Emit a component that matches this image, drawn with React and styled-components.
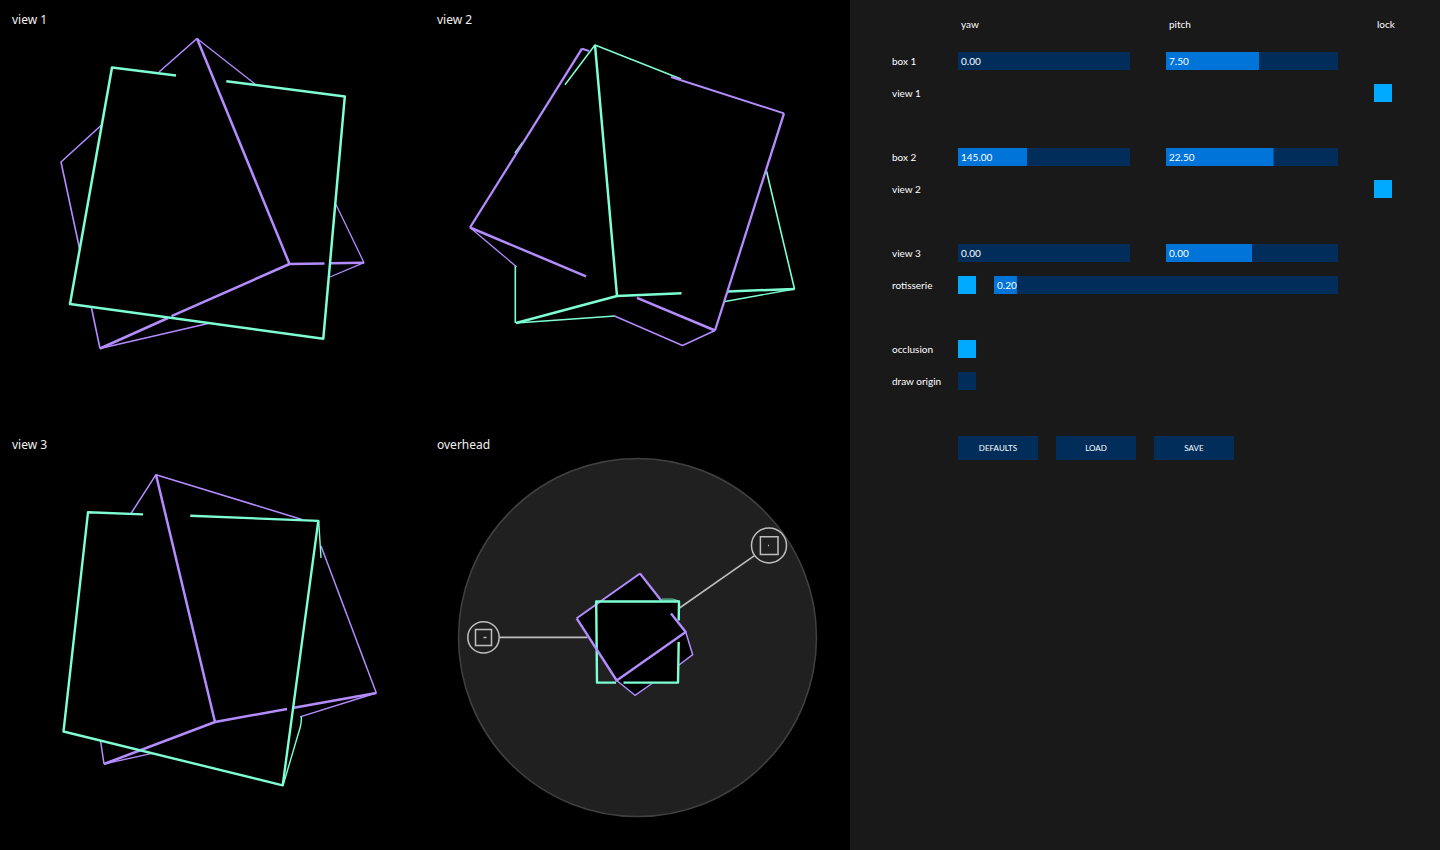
import React, { useState } from "react";
import styled, { createGlobalStyle } from "styled-components";

const MINT = "#7fffd4";
const VIOLET = "#b48cff";
const GREY = "#bebebe";

const GlobalStyle = createGlobalStyle`
  *, *::before, *::after { box-sizing: border-box; }
  body { margin: 0; background: #000; }
`;

const Page = styled.div`
  display: grid;
  grid-template-columns: 85fr 59fr;
  min-height: 100vh;
  background: #000;
  color: #fff;
`;

const Views = styled.main`
  display: grid;
  grid-template-columns: 1fr 1fr;
  align-content: start;
`;

const View = styled.figure`
  position: relative;
  margin: 0;
`;

const Caption = styled.figcaption`
  position: absolute;
  top: 11px;
  left: 12px;
  color: #f0f0f0;
  font: 12px/18px "Noto Sans", "Open Sans", sans-serif;
`;

const Canvas = styled.svg`
  display: block;
  width: 100%;
  height: auto;
`;

const Panel = styled.form`
  display: flex;
  flex-direction: column;
  gap: 46px;
  padding: 16px 48px 24px 40px;
  background: #191919;
  font: 10px/18px "Lato", sans-serif;
`;

const Group = styled.section`
  display: flex;
  flex-direction: column;
  gap: 14px;
`;

const Block = styled.div`
  display: flex;
  flex-direction: column;
  gap: 20px;
`;

const Row = styled.div`
  display: flex;
  height: 18px;
`;

const Label = styled.label`
  flex: 0 0 68px;
  padding-left: 2px;
`;

const Fields = styled.div`
  flex: 1;
  display: grid;
  grid-template-columns: 1fr 1fr 18px;
  column-gap: 36px;
  margin-left: ${(p) => (p.$unlabelled ? "68px" : "0")};
`;

const Heading = styled.span`
  padding-left: 3px;
  line-height: 16px;
  white-space: nowrap;
`;

const Wide = styled.div`
  grid-column: span 2;
  display: flex;
  gap: 18px;
`;

const Track = styled.div`
  position: relative;
  flex: 1;
  height: 18px;
`;

const Range = styled.input`
  appearance: none;
  display: block;
  width: 100%;
  height: 18px;
  margin: 0;
  border-radius: 0;
  cursor: ew-resize;
  background: linear-gradient(#0074d9, #0074d9) 0 0 / var(--fill) 100% no-repeat #002d5a;

  &::-webkit-slider-thumb {
    appearance: none;
    width: 1px;
    height: 18px;
    background: transparent;
  }
`;

const Value = styled.output`
  position: absolute;
  top: 0;
  left: 3px;
  pointer-events: none;
`;

const Toggle = styled.input`
  appearance: none;
  grid-column: ${(p) => p.$column || "auto"};
  width: 18px;
  height: 18px;
  margin: 0;
  background: #002d5a;

  &:checked { background: #00aaff; }
`;

const Actions = styled.div`
  display: flex;
  gap: 18px;
  margin-left: 68px;
`;

const Button = styled.button`
  width: 80px;
  height: 24px;
  padding: 0;
  border: 0;
  background: #002d5a;
  color: #fff;
  font: 8px/24px "Lato", sans-serif;
  cursor: pointer;

  &:hover { background: #0074d9; }
`;

function Slider({ id, labels, min, max, start }) {
  const [value, setValue] = useState(start);
  const fill = ((value - min) / (max - min)) * 100;
  return (
    <Track>
      <Range
        id={id}
        type="range"
        min={min}
        max={max}
        step="0.05"
        value={value}
        aria-labelledby={labels}
        onChange={(e) => setValue(Number(e.target.value))}
        style={{ "--fill": `${fill}%` }}
      />
      <Value htmlFor={id}>{value.toFixed(2)}</Value>
    </Track>
  );
}

function AngleRow({ id, name, yaw, pitch }) {
  return (
    <Row>
      <Label id={`${id}-label`} htmlFor={`${id}-yaw`}>{name}</Label>
      <Fields>
        <Slider id={`${id}-yaw`} labels={`${id}-label head-yaw`} min={0} max={360} start={yaw} />
        <Slider id={`${id}-pitch`} labels={`${id}-label head-pitch`} min={-90} max={90} start={pitch} />
      </Fields>
    </Row>
  );
}

function ToggleRow({ id, name, checked, column }) {
  return (
    <Row>
      <Label htmlFor={id}>{name}</Label>
      <Fields>
        <Toggle id={id} type="checkbox" defaultChecked={checked} $column={column} />
      </Fields>
    </Row>
  );
}

// Each stroke is [colour, width, path].
const view1 = [
  [VIOLET, 1.6, "M159 72 197 38.5"],
  [VIOLET, 1.3, "M197 38.5 255 84"],
  [VIOLET, 1.6, "M101 125.5 61 162 79.5 248.5"],
  [VIOLET, 1.6, "M91.5 308 100 348.5"],
  [VIOLET, 1.3, "M100 348.5 208 323.5"],
  [VIOLET, 1.3, "M336 204.5 364 262.7 330 277"],
  [VIOLET, 2.5, "M197 38.5 289.5 264 324.5 263.4"],
  [VIOLET, 2.5, "M330.5 263.3 364 262.7"],
  [VIOLET, 2.5, "M289.5 264 171.5 316.2"],
  [VIOLET, 2.5, "M168 318 100 348.5"],
  [MINT, 2.5, "M176 75.5 112 67.5 70 304 323.3 338.7 344.8 96.5 226.3 81.2"],
];
const view2 = [
  [MINT, 1.5, "M140 84.8 170 45 256 79"],
  [MINT, 1.5, "M90 153 97.5 142.5"],
  [MINT, 1.6, "M90.3 265.5V323"],
  [MINT, 1.4, "M91 323 190 316"],
  [MINT, 1.6, "M341.5 171 369.5 289"],
  [MINT, 1.4, "M369.5 289 300 301.5"],
  [VIOLET, 1.3, "M45 227.5 91.8 267"],
  [VIOLET, 1.4, "M189.5 316 257.5 345.5 290 330.5"],
  [VIOLET, 2.1, "M164 51 157 48.7"],
  [VIOLET, 2.3, "M157 48.7 45 227.5"],
  [VIOLET, 2.5, "M45 227.5 161 276.3"],
  [VIOLET, 2.5, "M212 297.8 290 330.5"],
  [MINT, 2.5, "M170 45 192 296 256.5 293.2"],
  [MINT, 2.5, "M192 296 91 323"],
  [MINT, 2.5, "M303 291.4 369.5 289"],
  [VIOLET, 2, "M246 77 359 113.4"],
  [VIOLET, 2.3, "M359 113.4 290 330.5"],
];
const view3 = [
  [VIOLET, 1.5, "M131 88.5 156 49.7 302 94.5"],
  [VIOLET, 1.5, "M321 121 376.3 268"],
  [VIOLET, 1.4, "M376.3 268 300 291.8"],
  [VIOLET, 1.5, "M100.5 315.5 104 339"],
  [VIOLET, 1.3, "M104 339 151 328.7"],
  [MINT, 1.4, "M318.7 96 321 133"],
  [MINT, 1.4, "M301.5 291.5Q301.5 298 300 303L283 360.5"],
  [VIOLET, 2.5, "M156 49.7 215 297 287 284"],
  [VIOLET, 2.5, "M294 282.8 376.3 268"],
  [VIOLET, 2.5, "M215 297 104 339"],
  [MINT, 2.4, "M143 89.4 88 87.3 63.5 306.5 282.7 360.3 318.3 95.9 190.3 90.8"],
];
const overhead = [
  [GREY, 1.6, "M74.5 212.4H162.5"],
  [GREY, 1.6, "M329.5 130.7 254.5 183"],
  [VIOLET, 2, "M151.7 193.3 215 148.5"],
  [VIOLET, 2.2, "M215 148.5 235.8 175"],
  [VIOLET, 1.4, "M191.7 255.5 210 270.3 227 258.5"],
  [VIOLET, 1.5, "M260.7 207 267.7 229.7 254 240"],
  [MINT, 2.4, "M253.7 195.5 254 176.5H171.2L172 257.6H191"],
  [MINT, 2.4, "M198.5 257.6H253L253.7 217"],
  [VIOLET, 2.4, "M151.7 193.3 191.7 255.5 260.7 207 246 188.5"],
];

function Strokes({ lines }) {
  return (
    <g fill="none" strokeLinejoin="round">
      {lines.map(([stroke, width, d]) => (
        <path key={d} d={d} stroke={stroke} strokeWidth={width} />
      ))}
    </g>
  );
}

function SolidView({ name, lines, children }) {
  return (
    <View>
      <Canvas viewBox="0 0 425 425" aria-hidden="true">
        {children}
        <Strokes lines={lines} />
      </Canvas>
      <Caption>{name}</Caption>
    </View>
  );
}

export default function App() {
  return (
    <>
      <GlobalStyle />
      <Page>
        <Views>
          <SolidView name="view 1" lines={view1} />
          <SolidView name="view 2" lines={view2} />
          <SolidView name="view 3" lines={view3} />
          <SolidView name="overhead" lines={overhead}>
            <circle cx="212.5" cy="212.5" r="179" fill="#202020" stroke="#404040" strokeWidth="1.5" />
            <path
              d="M215 148.5 151.7 193.3 191.7 255.5 210 270.3 227 258.5 253 257.6 254 240 267.7 229.7 260.7 207 254 198V176L235 175Z"
              fill="#000"
            />
            <path d="M235.5 176 237 174H248L254 176" fill="#286050" stroke="#5cc4a4" />
            <g fill="none" stroke={GREY} strokeWidth="1.5">
              <circle cx="58.5" cy="212.4" r="15.7" />
              <path d="M50.5 204.4H66.5V220.4H50.5ZM58.5 212.4H61.5" />
              <circle cx="344" cy="120.4" r="17.5" />
              <path d="M335.4 111.8H353V129.4H335.4ZM343 120.4H344" />
            </g>
          </SolidView>
        </Views>

        <Panel onSubmit={(e) => e.preventDefault()}>
          <Group>
            <Block>
              <Fields $unlabelled>
                <Heading id="head-yaw">yaw</Heading>
                <Heading id="head-pitch">pitch</Heading>
                <Heading id="head-lock">lock</Heading>
              </Fields>
              <AngleRow id="box1" name="box 1" yaw={0} pitch={7.5} />
            </Block>
            <ToggleRow id="view1-lock" name="view 1" checked column="3" />
          </Group>
          <Group>
            <AngleRow id="box2" name="box 2" yaw={145} pitch={22.5} />
            <ToggleRow id="view2-lock" name="view 2" checked column="3" />
          </Group>
          <Group>
            <AngleRow id="view3" name="view 3" yaw={0} pitch={0} />
            <Row>
              <Label id="rotisserie-label" htmlFor="rotisserie">rotisserie</Label>
              <Fields>
                <Wide>
                  <Toggle id="rotisserie" type="checkbox" defaultChecked />
                  <Slider id="rotisserie-speed" labels="rotisserie-label" min={0} max={3} start={0.2} />
                </Wide>
              </Fields>
            </Row>
          </Group>
          <Group>
            <ToggleRow id="occlusion" name="occlusion" checked />
            <ToggleRow id="draw-origin" name="draw origin" />
          </Group>
          <Actions>
            <Button type="reset">DEFAULTS</Button>
            <Button type="button">LOAD</Button>
            <Button type="submit">SAVE</Button>
          </Actions>
        </Panel>
      </Page>
    </>
  );
}
